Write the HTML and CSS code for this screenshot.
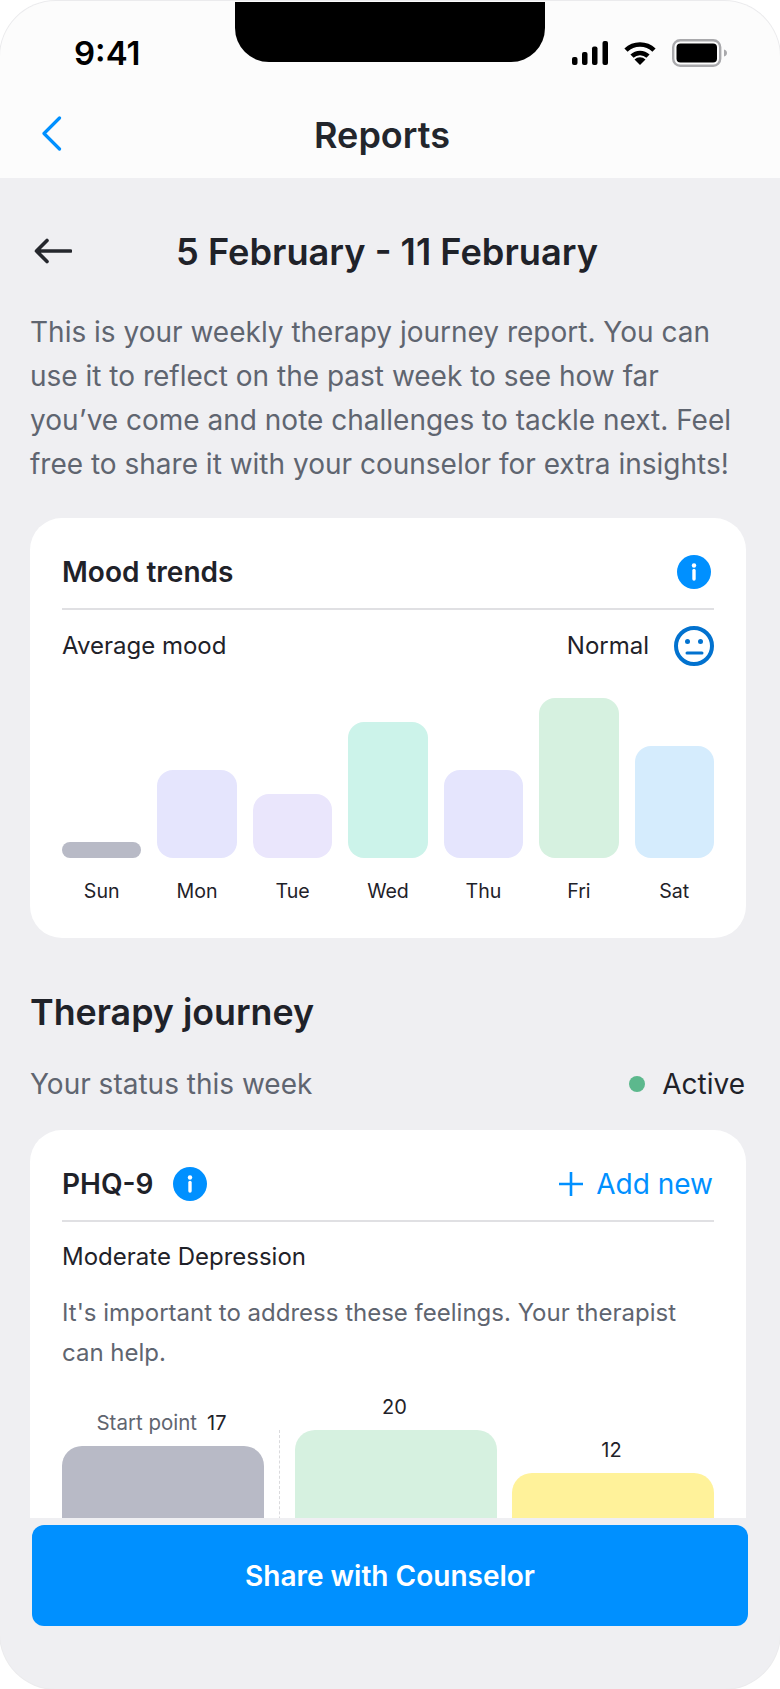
FILE: index.html
```html
<!DOCTYPE html>
<html lang="en">
<head>
<meta charset="utf-8">
<title>Reports</title>
<link rel="stylesheet" href="styles.css">
</head>
<body>
<div class="phone">
  <div class="notch"></div>
  <header class="top">
    <div class="status">
      <span class="time">9:41</span>
      <div class="status-icons">
        <svg class="ic-signal" width="36" height="24" viewBox="0 0 36 24"><rect x="0" y="16" width="5.5" height="8" rx="2"/><rect x="10" y="11" width="5.5" height="13" rx="2"/><rect x="20" y="5.5" width="5.5" height="18.5" rx="2"/><rect x="30.5" y="0" width="5.5" height="24" rx="2"/></svg>
        <svg class="ic-wifi" width="34" height="24" viewBox="0 0 34 24"><path d="M3 9.2A20 20 0 0 1 31 9.2" fill="none" stroke="#000" stroke-width="4.6"/><path d="M9 15.2A11.5 11.5 0 0 1 25 15.2" fill="none" stroke="#000" stroke-width="4.6"/><path d="M17 24L11.5 18.4A8 8 0 0 1 22.5 18.4Z"/></svg>
        <svg class="ic-batt" width="55" height="28" viewBox="0 0 55 28"><rect x="1.2" y="1.2" width="47" height="25.6" rx="7" fill="none" stroke="#A9A9AC" stroke-width="2.4"/><rect x="4.5" y="4.5" width="40.5" height="19" rx="4"/><path d="M52 10.5c1.8.6 3 1.8 3 3.5s-1.200 2.900-3 3.500z" fill="#A9A9AC"/></svg>
      </div>
    </div>
    <nav class="nav">
      <svg class="ic-back" width="20" height="35" viewBox="0 0 20 35"><path d="M17.500 2L2 17.500L17.500 33" fill="none" stroke="#0090FF" stroke-width="3.200" stroke-linecap="round" stroke-linejoin="round"/></svg>
      <h1 class="nav-title">Reports</h1>
    </nav>
  </header>

  <main class="scroll">
    <div class="date-row">
      <svg class="ic-arrow" width="38" height="26" viewBox="0 0 38 26"><path d="M36.500 13H2.500M13 2.500L2.500 13L13 23.500" fill="none" stroke="#25272D" stroke-width="3.600" stroke-linecap="round" stroke-linejoin="round"/></svg>
      <h2 class="date-title">5 February - 11 February</h2>
    </div>
    <p class="intro">This is your weekly therapy journey report. You can use it to reflect on the past week to see how far you’ve come and note challenges to tackle next. Feel free to share it with your counselor for extra insights!</p>

    <section class="card card-mood">
      <div class="card-head">
        <h3 class="card-title">Mood trends</h3>
        <svg class="ic-info" width="34" height="34" viewBox="0 0 34 34"><circle cx="17" cy="17" r="17" fill="#0090FF"/><circle cx="17" cy="10.500" r="2.200" fill="#fff"/><path d="M17 15.500V24" stroke="#fff" stroke-width="3.400" stroke-linecap="round"/></svg>
      </div>
      <div class="avg-row">
        <span class="avg-label">Average mood</span>
        <div class="avg-value">
          <span class="avg-text">Normal</span>
          <svg width="40" height="40" viewBox="0 0 40 40"><circle cx="20" cy="20" r="18" fill="none" stroke="#0272CF" stroke-width="4"/><circle cx="13.500" cy="15.500" r="2.500" fill="#0272CF"/><circle cx="26.500" cy="15.500" r="2.500" fill="#0272CF"/><path d="M13 27H28" stroke="#0272CF" stroke-width="3" stroke-linecap="round"/></svg>
        </div>
      </div>
      <div class="week">
        <div class="day"><div class="day-bar c-grey small" style="height:16px"></div><span class="day-name">Sun</span></div>
        <div class="day"><div class="day-bar c-indigo" style="height:88px"></div><span class="day-name">Mon</span></div>
        <div class="day"><div class="day-bar c-violet" style="height:64px"></div><span class="day-name">Tue</span></div>
        <div class="day"><div class="day-bar c-teal" style="height:136px"></div><span class="day-name">Wed</span></div>
        <div class="day"><div class="day-bar c-indigo" style="height:88px"></div><span class="day-name">Thu</span></div>
        <div class="day"><div class="day-bar c-green" style="height:160px"></div><span class="day-name">Fri</span></div>
        <div class="day"><div class="day-bar c-blue" style="height:112px"></div><span class="day-name">Sat</span></div>
      </div>
    </section>

    <h2 class="section-title">Therapy journey</h2>
    <div class="status-row">
      <span class="status-label">Your status this week</span>
      <div class="status-value"><span class="dot"></span><span>Active</span></div>
    </div>

    <section class="card card-phq">
      <div class="card-head">
        <div class="title-group">
          <h3 class="card-title">PHQ-9</h3>
          <svg class="ic-info" width="34" height="34" viewBox="0 0 34 34"><circle cx="17" cy="17" r="17" fill="#0090FF"/><circle cx="17" cy="10.500" r="2.200" fill="#fff"/><path d="M17 15.500V24" stroke="#fff" stroke-width="3.400" stroke-linecap="round"/></svg>
        </div>
        <div class="add-new">
          <svg width="24" height="24" viewBox="0 0 24 24"><path d="M12 0V24M0 12H24" stroke="#0090FF" stroke-width="2.600"/></svg>
          <span>Add new</span>
        </div>
      </div>
      <p class="severity">Moderate Depression</p>
      <p class="advice">It's important to address these feelings. Your therapist can help.</p>
      <div class="scores">
        <div class="score">
          <div class="score-label"><span class="muted">Start point</span><span>17</span></div>
          <div class="score-bar c-grey" style="height:104px"></div>
        </div>
        <div class="score-divider"></div>
        <div class="score">
          <div class="score-label"><span>20</span></div>
          <div class="score-bar c-green" style="height:120px"></div>
        </div>
        <div class="score">
          <div class="score-label"><span>12</span></div>
          <div class="score-bar c-yellow" style="height:77px"></div>
        </div>
      </div>
    </section>
  </main>

  <footer class="footer">
    <button class="share" type="button">Share with Counselor</button>
  </footer>
</div>
</body>
</html>
```
FILE: styles.css
```css
* { box-sizing: border-box; }
html, body { margin: 0; padding: 0; height: 1689px; overflow: hidden; background: #fff; }
body { font-family: Inter, "Liberation Sans", sans-serif; color: #1F2229; padding-top: 1px; }
h1, h2, h3, p { margin: 0; }

.phone {
  position: relative;
  width: 780px;
  height: 1688px;
  display: flex;
  flex-direction: column;
  overflow: hidden;
  background: #EFEFF2;
  border-radius: 56px;
  box-shadow: 0 0 0 1px #EBEBED;
}
.notch {
  position: absolute;
  top: 1px;
  left: 235px;
  width: 310px;
  height: 60px;
  background: #000;
  border-radius: 0 0 34px 34px;
}

.top { background: #FCFCFC; height: 177px; flex: none; }
.status {
  height: 93px;
  padding: 11px 53px 0 74px;
  display: flex;
  align-items: center;
  justify-content: space-between;
}
.time { font-size: 33px; font-weight: 600; color: #000; }
.status-icons { display: flex; align-items: center; gap: 15px; }
.ic-signal, .ic-wifi { fill: #000; }
.ic-batt { fill: #000; }

.nav {
  position: relative;
  height: 84px;
  padding-right: 16px;
  display: flex;
  align-items: center;
  justify-content: center;
}
.ic-back { position: absolute; left: 42px; top: 22px; }
.nav-title { font-size: 36px; line-height: 44px; font-weight: 600; color: #23262C; margin-bottom: 2px; }

.scroll {
  flex: 1;
  min-height: 0;
  overflow: hidden;
  padding: 50px 34px 0 30px;
}
.date-row {
  position: relative;
  height: 48px;
  display: flex;
  align-items: center;
  justify-content: center;
}
.ic-arrow { position: absolute; left: 4px; top: 10px; }
.date-title { font-size: 36.2px; line-height: 48px; font-weight: 600; color: #1F2229; margin-right: 2px; }
.intro {
  margin-top: 34px;
  font-size: 28px;
  line-height: 44px;
  color: #5F6570;
}

.card {
  background: #fff;
  border-radius: 32px;
  padding: 32px 32px 33px;
}
.card-mood { margin-top: 32px; }
.card-head {
  height: 60px;
  padding-bottom: 14px;
  border-bottom: 2px solid #E0E0E3;
  display: flex;
  align-items: center;
  justify-content: space-between;
}
.card-mood .ic-info { margin-right: 3px; }
.card-title { font-size: 28px; line-height: 44px; font-weight: 600; color: #1F2229; }

.avg-row {
  margin-top: 16px;
  height: 40px;
  display: flex;
  align-items: center;
  justify-content: space-between;
  font-size: 24px;
}
.avg-label, .avg-text { margin-bottom: 2px; }
.avg-value { display: flex; align-items: center; gap: 25px; }

.week {
  margin-top: 32px;
  display: grid;
  grid-template-columns: repeat(7, 1fr);
  column-gap: 16px;
  align-items: end;
}
.day { display: flex; flex-direction: column; align-items: stretch; }
.day-bar { border-radius: 16px; }
.day-bar.small { border-radius: 8px; }
.day-name {
  margin-top: 19px;
  font-size: 19.6px;
  line-height: 28px;
  text-align: center;
}

.c-grey { background: #B8BAC6; }
.c-indigo { background: #E5E5FD; }
.c-violet { background: #EAE6FC; }
.c-teal { background: #CCF3EA; }
.c-green { background: #D6F1E0; }
.c-blue { background: #D5ECFD; }
.c-yellow { background: #FFF29A; }

.section-title {
  margin-top: 52px;
  font-size: 35.8px;
  line-height: 44px;
  font-weight: 600;
}
.status-row {
  margin-top: 28px;
  height: 44px;
  display: flex;
  align-items: center;
  justify-content: space-between;
  font-size: 28px;
}
.status-label { color: #5F6570; }
.status-value { display: flex; align-items: center; gap: 17px; margin-right: 1px; color: #1F2229; }
.dot { width: 16px; height: 16px; border-radius: 50%; background: #5CB88D; }

.card-phq { margin-top: 24px; }
.title-group { display: flex; align-items: center; gap: 19px; }
.add-new {
  display: flex;
  align-items: center;
  gap: 13px;
  margin-right: 1px;
  font-size: 28px;
  color: #0090FF;
}
.severity { margin-top: 17px; font-size: 24px; line-height: 36px; }
.advice { margin-top: 18px; font-size: 24px; line-height: 40px; color: #5F6570; }

.scores {
  margin-top: 20px;
  display: flex;
  align-items: flex-end;
  gap: 15px;
}
.score { flex: 1; display: flex; flex-direction: column; }
.score-label {
  display: flex;
  justify-content: center;
  align-items: baseline;
  gap: 10px;
  padding-right: 3px;
  font-size: 20px;
  line-height: 28px;
  margin-bottom: 9px;
}
.muted { color: #5F6570; font-size: 20.5px; }
.score-bar { border-radius: 20px; }
.score-divider {
  width: 0;
  height: 120px;
  border-left: 1px dashed #DADADD;
}

.footer {
  flex: none;
  height: 171px;
  padding: 7px 32px 0;
}
.share {
  display: block;
  width: 100%;
  height: 101px;
  border: 0;
  border-radius: 12px;
  background: #0090FF;
  color: #fff;
  font-family: inherit;
  font-size: 28px;
  font-weight: 600;
}
```
